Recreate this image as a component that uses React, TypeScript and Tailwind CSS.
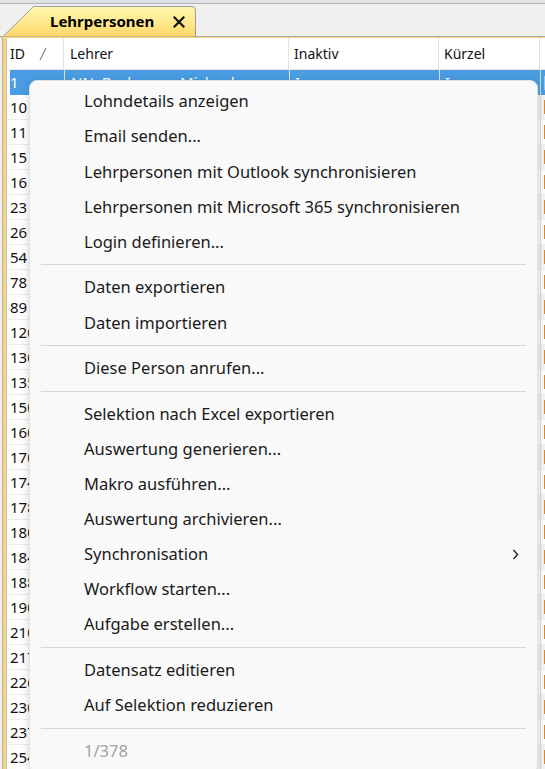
import React from "react";

type MenuEntry =
  | { kind: "item"; label: string; sub?: boolean; disabled?: boolean }
  | { kind: "sep" };

const menu: MenuEntry[] = [
  { kind: "item", label: "Lohndetails anzeigen" },
  { kind: "item", label: "Email senden..." },
  { kind: "item", label: "Lehrpersonen mit Outlook synchronisieren" },
  { kind: "item", label: "Lehrpersonen mit Microsoft 365 synchronisieren" },
  { kind: "item", label: "Login definieren..." },
  { kind: "sep" },
  { kind: "item", label: "Daten exportieren" },
  { kind: "item", label: "Daten importieren" },
  { kind: "sep" },
  { kind: "item", label: "Diese Person anrufen..." },
  { kind: "sep" },
  { kind: "item", label: "Selektion nach Excel exportieren" },
  { kind: "item", label: "Auswertung generieren..." },
  { kind: "item", label: "Makro ausführen..." },
  { kind: "item", label: "Auswertung archivieren..." },
  { kind: "item", label: "Synchronisation", sub: true },
  { kind: "item", label: "Workflow starten..." },
  { kind: "item", label: "Aufgabe erstellen..." },
  { kind: "sep" },
  { kind: "item", label: "Datensatz editieren" },
  { kind: "item", label: "Auf Selektion reduzieren" },
  { kind: "sep" },
  { kind: "item", label: "1/378", disabled: true },
];

const ids = [
  "1", "10", "11", "15", "16", "23", "26", "54", "78", "89", "120", "130", "135",
  "150", "160", "170", "174", "178", "180", "184", "188", "190", "210", "217",
  "226", "230", "237", "254",
];

function Tab() {
  return (
    <div className="relative ml-[2px] mt-[2px] h-[31px] w-[195px]">
      <svg className="absolute inset-0" width="195" height="31" viewBox="0 0 195 31">
        <defs>
          <linearGradient id="tabFill" x1="0" y1="0" x2="0" y2="1">
            <stop offset="0" stopColor="#fff8b0" />
            <stop offset="0.55" stopColor="#ffe88a" />
            <stop offset="1" stopColor="#fdd469" />
          </linearGradient>
        </defs>
        <path
          d="M0.5 31 L31.5 0.5 L190 0.5 Q193.5 0.5 193.5 4 L193.5 31 Z"
          fill="url(#tabFill)"
          stroke="#9c9ca4"
          strokeWidth="1"
        />
      </svg>
      <div className="relative flex h-full items-center pl-[48px] pr-[10px]">
        <span className="text-[15px] font-bold leading-none text-black">Lehrpersonen</span>
        <svg className="ml-auto mr-[2px]" width="12" height="12" viewBox="0 0 12 12">
          <path d="M1.5 1.5 L10.5 10.5 M10.5 1.5 L1.5 10.5" stroke="#111" strokeWidth="2.2" strokeLinecap="square" />
        </svg>
      </div>
    </div>
  );
}

function Grid() {
  return (
    <div className="flex min-h-0 flex-1">
      {/* yellow frame on the left */}
      <div className="w-[2px] bg-[#f0f0f0]" />
      <div className="w-[1px] bg-[#b4b4b4]" />
      <div className="w-[3px] bg-[#f7d57a]" />
      <div className="w-[1px] bg-[#c8c8c8]" />
      <div className="flex min-w-0 flex-1 flex-col bg-white text-[14px] text-[#111]">
        <div className="flex h-[32px] shrink-0 items-center border-b border-[#e6e6e6]">
          <div className="flex h-full w-[57px] shrink-0 items-center border-r border-[#e2e2e2] pl-[3px]">
            <span>ID</span>
            <svg className="ml-[14px]" width="8" height="14" viewBox="0 0 8 14">
              <path d="M7 1 L1 13" stroke="#666" strokeWidth="1" />
            </svg>
          </div>
          <div className="flex h-full w-[225px] shrink-0 items-center border-r border-[#e2e2e2] pl-[6px]">Lehrer</div>
          <div className="flex h-full w-[150px] shrink-0 items-center border-r border-[#e2e2e2] pl-[5px]">Inaktiv</div>
          <div className="flex h-full w-[101px] shrink-0 items-center border-r border-[#e2e2e2] pl-[5px]">Kürzel</div>
          <div className="flex-1" />
        </div>
        {ids.map((id, i) => {
          const sel = i === 0;
          const alt = i % 2 === 1;
          return (
            <div
              key={i}
              className={
                sel
                  ? "flex h-[25px] shrink-0 items-center bg-[#4a9de2] text-[15px] text-white"
                  : alt
                  ? "flex h-[25px] shrink-0 items-center border-b border-[#ececec] bg-[#f4f4f4] text-[15px]"
                  : "flex h-[25px] shrink-0 items-center border-b border-[#ececec] bg-white text-[15px]"
              }
            >
              <div className="flex h-full w-[57px] shrink-0 items-center bg-white pl-[3px] text-[#111]">
                <span className={sel ? "flex h-full w-full items-center bg-[#4a9de2] text-white" : ""}>{id}</span>
              </div>
              <div className="flex h-full w-[225px] shrink-0 items-center border-l border-[#e2e2e2] pl-[6px]">
                {sel ? "NN, Beckmann Michael" : ""}
              </div>
              <div className="flex h-full w-[150px] shrink-0 items-center border-l border-[#e2e2e2] pl-[5px]">
                {sel ? "I" : ""}
              </div>
              <div className="flex h-full w-[101px] shrink-0 items-center border-l border-[#e2e2e2] pl-[5px]">
                {sel ? "I" : ""}
              </div>
              <div className="flex h-full flex-1 items-center border-l border-[#d8d8d8] pl-[3px]">
                <div className={sel ? "h-[14px] w-[3px] bg-[#8cc8f4]" : "h-[14px] w-[3px] bg-[#e0892a]"} />
              </div>
            </div>
          );
        })}
      </div>
    </div>
  );
}

function ContextMenu() {
  return (
    <div className="absolute left-[29px] top-[80px] w-[509px] rounded-[8px] border border-[#e3e3e3] bg-[#f9f9f9] pt-[3px] pb-[4px] shadow-[0_2px_8px_rgba(0,0,0,0.18)]">
      {menu.map((m, i) =>
        m.kind === "sep" ? (
          <div key={i} className="flex h-[10.4px] items-center px-[11px]">
            <div className="h-[1px] w-full bg-[#d7d7d7]" />
          </div>
        ) : (
          <div
            key={i}
            className={
              m.disabled
                ? "flex h-[35.15px] items-center pl-[54px] pr-[18px] text-[#a3a3a3]"
                : "flex h-[35.15px] items-center pl-[54px] pr-[18px] text-[#1a1a1a]"
            }
          >
            <span className="leading-none">{m.label}</span>
            {m.sub ? (
              <svg className="ml-auto" width="7" height="11" viewBox="0 0 7 11">
                <path d="M1.5 1 L5.5 5.5 L1.5 10" fill="none" stroke="#222" strokeWidth="1.4" />
              </svg>
            ) : null}
          </div>
        )
      )}
    </div>
  );
}

export default function App() {
  return (
    <div
      className="relative flex h-[769px] w-[545px] flex-col overflow-hidden bg-[#f0f0f0]"
      style={{ fontFamily: '"Noto Sans", "Open Sans", sans-serif' }}
    >
      <div className="h-[3px] shrink-0 bg-[#e2e2e6]" />
      <div className="h-[1px] shrink-0 bg-[#b0b0b8]" />
      <div className="flex h-[32px] shrink-0 bg-[#f0f0f0]">
        <Tab />
      </div>
      <div className="h-[1px] shrink-0 bg-[#a8a8a8]" />
      <div className="h-[1px] shrink-0 bg-[#f3d67e]" />
      <Grid />
      <div className="text-[16.5px]">
        <ContextMenu />
      </div>
    </div>
  );
}
